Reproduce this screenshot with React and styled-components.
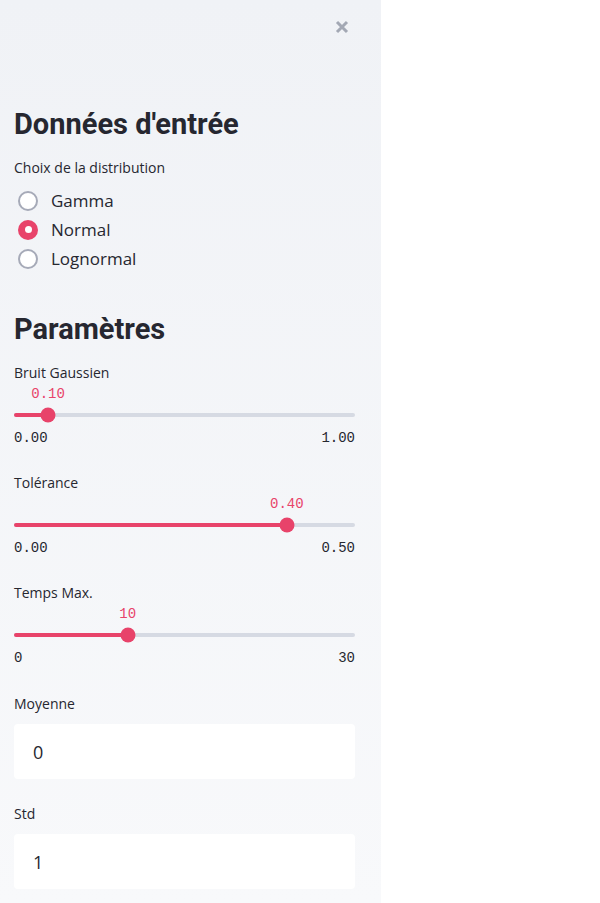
import styled, { createGlobalStyle } from "styled-components";

const GlobalStyle = createGlobalStyle`
    body{
        margin: 0;
        background: #ffffff;
        font-family: "Open Sans", "Noto Sans", sans-serif;
        color: rgb(38, 39, 48);
    }
`;

const red = 'rgb(232, 67, 106)';

const sliders = [
    { label: 'Bruit Gaussien', value: 0.1, min: 0, max: 1, fmt: (v) => v.toFixed(2) },
    { label: 'Tolérance', value: 0.4, min: 0, max: 0.5, fmt: (v) => v.toFixed(2) },
    { label: 'Temps Max.', value: 10, min: 0, max: 30, fmt: (v) => String(v) },
];

export default function App(){
    return(
        <>
            <GlobalStyle />
            <Sidebar>
                <CloseRow>
                    <CloseIcon width="16" height="16" viewBox="0 0 16 16">
                        <path d="M3 3 L13 13 M13 3 L3 13" stroke="#a3a8b4" strokeWidth="3" strokeLinecap="butt" />
                    </CloseIcon>
                </CloseRow>

                <Heading top={53}>Données d'entrée</Heading>
                <Label top={17}>Choix de la distribution</Label>
                <RadioGroup>
                    {['Gamma','Normal','Lognormal'].map((opt)=>(
                        <RadioRow key={opt}>
                            <RadioDot checked={opt==='Normal'} />
                            <span>{opt}</span>
                        </RadioRow>
                    ))}
                </RadioGroup>

                <Heading top={39}>Paramètres</Heading>
                {sliders.map((s,index)=>(
                    <Slider key={s.label} slider={s} first={index===0} />
                ))}

                <Label top={25}>Moyenne</Label>
                <NumberBox>0</NumberBox>
                <Label top={25}>Std</Label>
                <NumberBox>1</NumberBox>
            </Sidebar>
        </>
    );
}

function Slider({slider,first}){
    const pct = 100*(slider.value-slider.min)/(slider.max-slider.min);
    return(
        <SliderBlock first={first}>
            <Label top={0}>{slider.label}</Label>
            <ValueRow>
                <ThumbValue style={{left:`${pct}%`}}>{slider.fmt(slider.value)}</ThumbValue>
            </ValueRow>
            <TrackRow>
                <Track>
                    <Fill style={{width:`${pct}%`}} />
                    <Thumb style={{left:`${pct}%`}} />
                </Track>
            </TrackRow>
            <MinMax>
                <span>{slider.fmt(slider.min)}</span>
                <span>{slider.fmt(slider.max)}</span>
            </MinMax>
        </SliderBlock>
    );
}

const Sidebar = styled.div`
    width: 381px;
    min-height: 903px;
    box-sizing: border-box;
    padding: 0 26px 14px 14px;
    background-image: linear-gradient(180deg, rgb(240, 242, 246), rgb(248, 249, 251));
    display: flex;
    flex-direction: column;
`;

const CloseRow = styled.div`
    height: 54px;
    display: flex;
    align-items: center;
    justify-content: flex-end;
    padding-right: 5px;
`;

const CloseIcon = styled.svg`
    display: block;
`;

const Heading = styled.h2`
    margin: ${props=>props.top}px 0 0;
    font-family: Roboto, "Noto Sans", sans-serif;
    font-size: 29px;
    line-height: 34px;
    font-weight: 700;
    color: rgb(38, 39, 48);
`;

const Label = styled.div`
    margin-top: ${props=>props.top}px;
    font-size: 14px;
    line-height: 20px;
    color: rgb(38, 39, 48);
`;

const RadioGroup = styled.div`
    margin-top: 8px;
    display: flex;
    flex-direction: column;
`;

const RadioRow = styled.label`
    display: flex;
    align-items: center;
    gap: 13px;
    height: 29px;
    font-size: 17px;
    color: rgb(38, 39, 48);
`;

const RadioDot = styled.span`
    width: 20px;
    height: 20px;
    box-sizing: border-box;
    border-radius: 50%;
    margin-left: 4px;
    display: flex;
    align-items: center;
    justify-content: center;
    border: ${props=>props.checked?'none':'2px solid rgb(166, 170, 184)'};
    background-color: ${props=>props.checked?red:'#ffffff'};
    &::after{
        content: '';
        display: ${props=>props.checked?'block':'none'};
        width: 7px;
        height: 7px;
        border-radius: 50%;
        background: #ffffff;
    }
`;

const SliderBlock = styled.div`
    margin-top: ${props=>props.first?17:24}px;
    display: flex;
    flex-direction: column;
`;

const ValueRow = styled.div`
    position: relative;
    height: 22px;
`;

const ThumbValue = styled.span`
    position: absolute;
    top: 3px;
    transform: translateX(-50%);
    font-family: "Liberation Mono", "DejaVu Sans Mono", monospace;
    font-size: 14px;
    line-height: 16px;
    color: ${red};
`;

const TrackRow = styled.div`
    height: 20px;
    display: flex;
    align-items: center;
`;

const Track = styled.div`
    position: relative;
    width: 100%;
    height: 4px;
    border-radius: 2px;
    background: rgb(214, 218, 227);
`;

const Fill = styled.div`
    height: 100%;
    border-radius: 2px;
    background: ${red};
`;

const Thumb = styled.div`
    position: absolute;
    top: 50%;
    width: 15px;
    height: 15px;
    border-radius: 50%;
    background: ${red};
    transform: translate(-50%, -50%);
`;

const MinMax = styled.div`
    height: 24px;
    padding-top: 2px;
    box-sizing: border-box;
    display: flex;
    align-items: center;
    justify-content: space-between;
    font-family: "Liberation Mono", "DejaVu Sans Mono", monospace;
    font-size: 14px;
    color: rgb(38, 39, 48);
`;

const NumberBox = styled.div`
    margin-top: 10px;
    height: 55px;
    box-sizing: border-box;
    padding: 0 19px;
    display: flex;
    align-items: center;
    background: #ffffff;
    border-radius: 4px;
    font-size: 18px;
    color: rgb(38, 39, 48);
`;
